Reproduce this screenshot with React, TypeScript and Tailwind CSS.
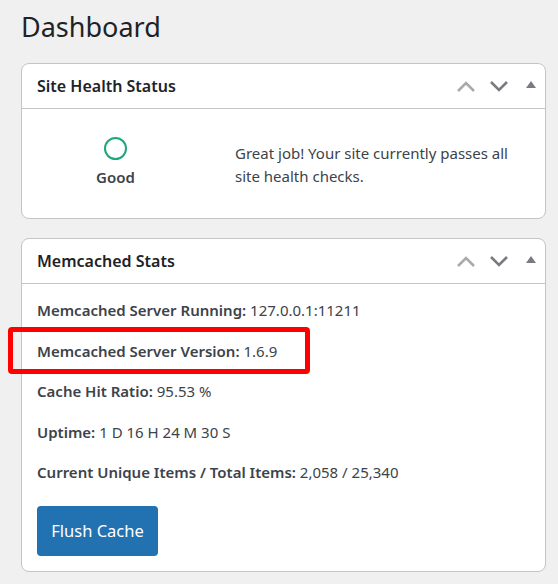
import React from "react";

function Chevron({ up, color }: { up?: boolean; color: string }) {
  return (
    <svg width="20" height="12" viewBox="0 0 20 12" className="block">
      <polyline
        points={up ? "2,11 10,3 18,11" : "2,2 10,10 18,2"}
        fill="none"
        stroke={color}
        strokeWidth="2.6"
      />
    </svg>
  );
}

function CardHeader({ title }: { title: string }) {
  return (
    <div className="flex items-center justify-between h-[45px] pl-[15px] pr-[8px] border-b border-[#c3c4c7]">
      <h2 className="text-[16px] font-semibold text-[#1d2327]">{title}</h2>
      <div className="flex items-center gap-[13px]">
        <Chevron up color="#a7aaad" />
        <Chevron color="#787c82" />
        <svg width="12" height="12" viewBox="0 0 12 12" className="block ml-[3px] -mt-[3px]">
          <polygon points="1,9 6,2 11,9" fill="#787c82" />
        </svg>
      </div>
    </div>
  );
}

export default function App() {
  return (
    <div
      className="min-h-screen bg-[#f0f0f1] pl-[21px] pr-[12px] pt-[8px] text-[#3c434a]"
      style={{ fontFamily: '"Noto Sans", "Open Sans", sans-serif' }}
    >
      <h1 className="text-[27px] leading-[38px] text-[#1d2327] font-normal">Dashboard</h1>

      {/* Site Health */}
      <div className="mt-[17px] bg-white border border-[#c3c4c7] rounded-lg">
        <CardHeader title="Site Health Status" />
        <div className="flex h-[109px]">
          <div className="w-[187px] shrink-0 flex flex-col items-center pt-[28px]">
            <div className="w-[23px] h-[23px] rounded-full border-2 border-[#1ea67c]" />
            <div className="mt-[6px] text-[15px] font-semibold text-[#3c434a]">Good</div>
          </div>
          <p className="pl-[26px] pt-[33px] pr-[24px] text-[15px] leading-[23px] text-[#3c434a]">
            Great job! Your site currently passes all site health checks.
          </p>
        </div>
      </div>

      {/* Memcached */}
      <div className="mt-[19px] bg-white border border-[#c3c4c7] rounded-lg">
        <CardHeader title="Memcached Stats" />
        <div className="px-[15px] pt-[14px] pb-[15px] text-[15px] leading-[24px]">
          <div className="flex flex-col gap-[16.5px]">
            <p>
              <span className="font-semibold">Memcached Server Running:</span> 127.0.0.1:11211
            </p>
            <p className="relative">
              <span className="font-semibold">Memcached Server Version:</span> 1.6.9
              <span className="absolute left-[-29px] top-[-12px] w-[302px] h-[47px] border-[5px] border-[#ff0000] rounded-[4px]" />
            </p>
            <p>
              <span className="font-semibold">Cache Hit Ratio:</span> 95.53 %
            </p>
            <p>
              <span className="font-semibold">Uptime:</span> 1 D 16 H 24 M 30 S
            </p>
            <p>
              <span className="font-semibold">Current Unique Items / Total Items:</span> 2,058 / 25,340
            </p>
          </div>
          <button className="mt-[22px] h-[50px] w-[121px] rounded-[4px] bg-[#2271b1] text-white text-[16.5px]">
            Flush Cache
          </button>
        </div>
      </div>
    </div>
  );
}
